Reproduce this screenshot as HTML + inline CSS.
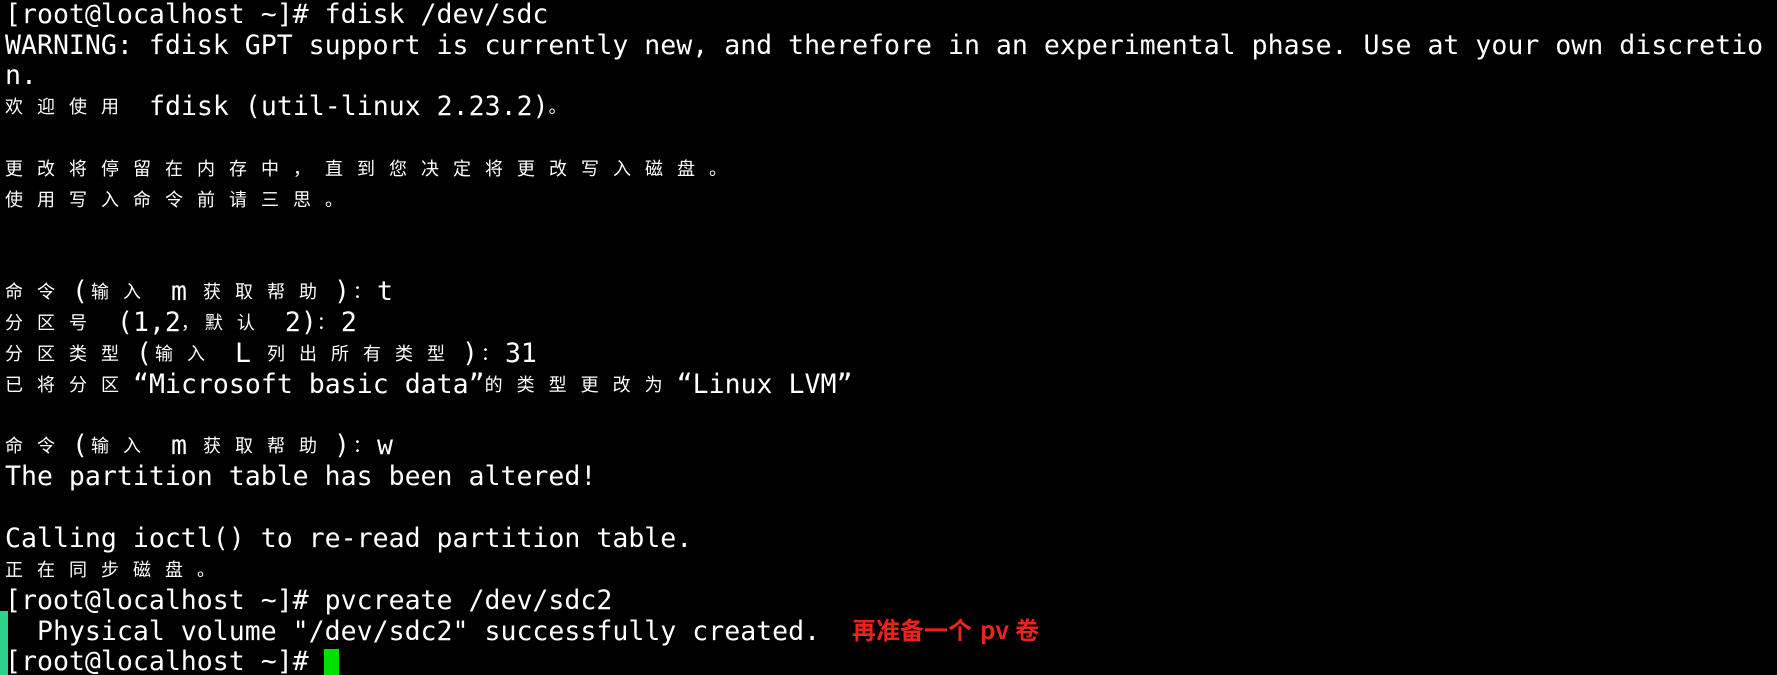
<!DOCTYPE html>
<html><head><meta charset="utf-8"><style>
html,body{margin:0;padding:0;background:#000;width:1777px;height:675px;overflow:hidden}
body{position:relative;font-family:"DejaVu Sans Mono","Liberation Mono",monospace;font-size:26.55px;color:#fff}
.r{position:absolute;left:5px;height:31px;line-height:31px;white-space:pre}
.c{display:inline-block;width:32px;font-family:"Noto Sans CJK SC","WenQuanYi Zen Hei",sans-serif;font-size:18px;text-align:left;vertical-align:top}
.p{display:inline-block;width:22px;text-align:center}
.bar{position:absolute;left:0;top:611px;width:8px;height:64px;background:#2fd08a}
.cur{position:absolute;left:324px;top:649px;width:15px;height:26px;background:#00e000}
.note{position:absolute;left:852px;top:612px;font-family:"Noto Sans CJK SC","WenQuanYi Zen Hei",sans-serif;font-weight:bold;font-size:24px;color:#e8251c;line-height:34px;white-space:pre}
</style></head><body>
<div class="r" style="top:-1px">[root@localhost ~]# fdisk /dev/sdc</div>
<div class="r" style="top:30px">WARNING: fdisk GPT support is currently new, and therefore in an experimental phase. Use at your own discretio</div>
<div class="r" style="top:60px">n.</div>
<div class="r" style="top:91px"><span class="c">欢</span><span class="c">迎</span><span class="c">使</span><span class="c">用</span> fdisk (util-linux 2.23.2)<span class="c">。</span></div>
<div class="r" style="top:153px"><span class="c">更</span><span class="c">改</span><span class="c">将</span><span class="c">停</span><span class="c">留</span><span class="c">在</span><span class="c">内</span><span class="c">存</span><span class="c">中</span><span class="c">，</span><span class="c">直</span><span class="c">到</span><span class="c">您</span><span class="c">决</span><span class="c">定</span><span class="c">将</span><span class="c">更</span><span class="c">改</span><span class="c">写</span><span class="c">入</span><span class="c">磁</span><span class="c">盘</span><span class="c">。</span></div>
<div class="r" style="top:184px"><span class="c">使</span><span class="c">用</span><span class="c">写</span><span class="c">入</span><span class="c">命</span><span class="c">令</span><span class="c">前</span><span class="c">请</span><span class="c">三</span><span class="c">思</span><span class="c">。</span></div>
<div class="r" style="top:276px"><span class="c">命</span><span class="c">令</span><span class="p">(</span><span class="c">输</span><span class="c">入</span> m <span class="c">获</span><span class="c">取</span><span class="c">帮</span><span class="c">助</span><span class="p">)</span><span class="c" style="width:24px">：</span>t</div>
<div class="r" style="top:307px"><span class="c">分</span><span class="c">区</span><span class="c">号</span> (1,2<span class="c" style="width:24px">，</span><span class="c">默</span><span class="c">认</span> 2)<span class="c" style="width:24px">：</span>2</div>
<div class="r" style="top:338px"><span class="c">分</span><span class="c">区</span><span class="c">类</span><span class="c">型</span><span class="p">(</span><span class="c">输</span><span class="c">入</span> L <span class="c">列</span><span class="c">出</span><span class="c">所</span><span class="c">有</span><span class="c">类</span><span class="c">型</span><span class="p">)</span><span class="c" style="width:24px">：</span>31</div>
<div class="r" style="top:369px"><span class="c">已</span><span class="c">将</span><span class="c">分</span><span class="c">区</span>“Microsoft basic data”<span class="c">的</span><span class="c">类</span><span class="c">型</span><span class="c">更</span><span class="c">改</span><span class="c">为</span>“Linux LVM”</div>
<div class="r" style="top:430px"><span class="c">命</span><span class="c">令</span><span class="p">(</span><span class="c">输</span><span class="c">入</span> m <span class="c">获</span><span class="c">取</span><span class="c">帮</span><span class="c">助</span><span class="p">)</span><span class="c" style="width:24px">：</span>w</div>
<div class="r" style="top:461px">The partition table has been altered!</div>
<div class="r" style="top:523px">Calling ioctl() to re-read partition table.</div>
<div class="r" style="top:554px"><span class="c">正</span><span class="c">在</span><span class="c">同</span><span class="c">步</span><span class="c">磁</span><span class="c">盘</span><span class="c">。</span></div>
<div class="r" style="top:585px">[root@localhost ~]# pvcreate /dev/sdc2</div>
<div class="r" style="top:616px">  Physical volume "/dev/sdc2" successfully created.</div>
<div class="r" style="top:646px">[root@localhost ~]# </div>
<div class="bar"></div>
<div class="cur"></div>
<div class="note">再准备一个<span style="display:inline-block;width:8px"></span>pv<span style="display:inline-block;width:6px"></span>卷</div>
</body></html>
